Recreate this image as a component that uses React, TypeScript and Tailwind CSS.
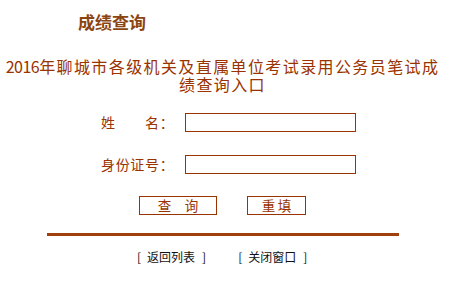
import React from "react";

export default function App() {
  return (
    <div
      className="w-[451px] h-[288px] bg-white overflow-hidden flex flex-col"
      style={{ fontFamily: '"Noto Sans CJK SC", "Noto Sans", sans-serif' }}
    >
      <div className="pt-[13px] pl-[78px] text-[17px] leading-[17px] font-bold text-[#8b4513]">
        成绩查询
      </div>

      <div className="mt-[27px] w-[445px] text-center text-[16px] leading-[18px] text-[#993300] tracking-[1.4px]">
        <span className="tracking-[-0.5px]">2016</span>年聊城市各级机关及直属单位考试录用公务员笔试成
        <br />
        绩查询入口
      </div>

      <div className="mt-[20px] flex flex-col pl-[101px] text-[14px] tracking-[0.67px] text-[#993300]">
        <div className="flex items-center">
          <span className="w-[84px] leading-[19px]">姓　　名：</span>
          <div className="w-[171px] h-[19px] border border-[#993300] bg-white" />
        </div>
        <div className="mt-[23px] flex items-center">
          <span className="w-[84px] leading-[19px]">身份证号：</span>
          <div className="w-[171px] h-[19px] border border-[#993300] bg-white" />
        </div>
      </div>

      <div className="mt-[22px] flex pl-[139px] gap-[30px] text-[13.5px] text-[#993300]">
        <div className="w-[78px] h-[19px] border border-[#993300] flex items-center justify-center leading-none">
          查　询
        </div>
        <div className="w-[59px] h-[19px] border border-[#993300] flex items-center justify-center leading-none">
          <span className="mr-[2.5px]">重</span>填
        </div>
      </div>

      <div className="mt-[18px] ml-[47px] w-[352px] h-[3px] bg-[#a0410d]" />

      <div className="mt-[15px] flex pl-[137px] text-[12px] leading-[12px] text-[#111]">
        <div className="flex">
          <span>[</span>
          <span className="ml-[6px]">返回列表</span>
          <span className="ml-[7px]">]</span>
        </div>
        <div className="flex ml-[32px]">
          <span>[</span>
          <span className="ml-[6px]">关闭窗口</span>
          <span className="ml-[7px]">]</span>
        </div>
      </div>
    </div>
  );
}
